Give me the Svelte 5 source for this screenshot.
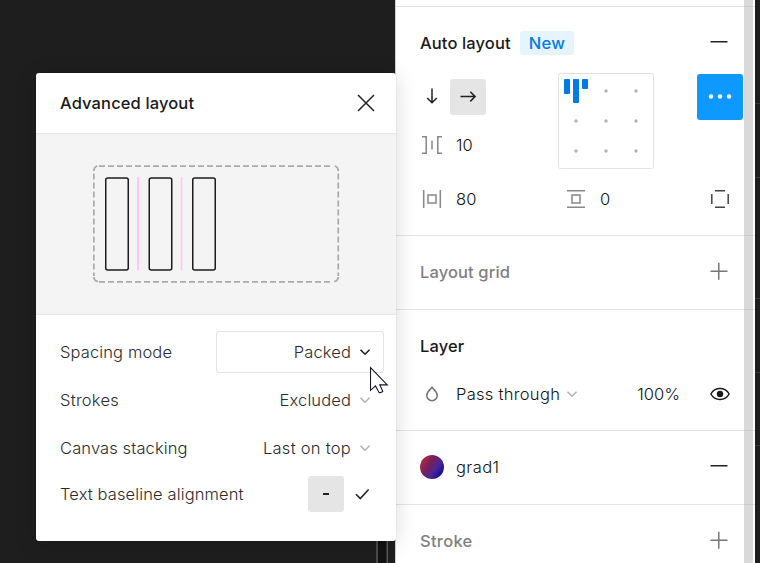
<script>
  const dots = [
    [606, 91], [636, 91],
    [576, 121], [606, 121], [636, 121],
    [576, 151], [606, 151], [636, 151]
  ];
  const guides = [103, 177, 298, 372, 445];
</script>

{#snippet chevron(color)}
  <svg class="chev" width="12" height="12" viewBox="0 0 12 12"><path d="M1.5 3.700 6 8.200l4.500-4.500" fill="none" stroke={color} stroke-width="1.600" /></svg>
{/snippet}

{#snippet plus()}
  <svg class="act" width="18" height="18" viewBox="0 0 18 18"><path d="M.5 9.250h17M8.750.750v17" stroke="#777" stroke-width="1.500" /></svg>
{/snippet}

{#snippet minus()}
  <svg class="act" width="18" height="18" viewBox="0 0 18 18"><path d="M.5 8.750h17" stroke="#222" stroke-width="1.500" /></svg>
{/snippet}

<div class="screen">
  <svg class="canvas" width="760" height="563">
    {#each guides as y}
      <path d="M755 {y + 0.5}h5" stroke="#3a3a3a" />
    {/each}
    <path d="M378 540h9v23h-9z" fill="#131313" />
    <path d="M377 540v23M387.200 540v23" stroke="#777" stroke-width="1" />
  </svg>

  <aside class="panel">
    <section class="top"></section>

    <section class="auto">
      <header>
        <b>Auto layout</b><span class="new">New</span>
        {@render minus()}
      </header>
      <div class="controls">
        <div class="left">
          <div class="dirs">
            <svg width="24" height="36" viewBox="0 0 24 36"><path d="M12 9.500v14M7.200 19l4.800 4.800 4.800-4.800" fill="none" stroke="#222" stroke-width="1.500" /></svg>
            <span class="sel"><svg width="36" height="36" viewBox="0 0 36 36"><path d="M10.500 17.600h14.500M20.300 12.800l4.800 4.800-4.800 4.800" fill="none" stroke="#222" stroke-width="1.500" /></svg></span>
          </div>
          <div class="field gapfield">
            <svg width="24" height="24" viewBox="0 0 24 24"><path d="M2 3.700h4.200v16.600H2M22 3.700h-4.200v16.600H22" fill="none" stroke="#888" stroke-width="1.500" /><path d="M12 7.500v9" stroke="#888" stroke-width="1.500" /></svg>
            <span>10</span>
          </div>
        </div>
        <svg class="align" width="96" height="96" viewBox="558 73 96 96">
          <rect x="558.500" y="73.500" width="95" height="95" rx="2" fill="#fff" stroke="#e2e2e2" />
          <g fill="#007be5"><rect x="564" y="79" width="6" height="15" rx="1" /><rect x="573" y="79" width="6" height="24" rx="1" /><rect x="582" y="79" width="6" height="10" rx="1" /></g>
          {#each dots as [x, y]}<circle cx={x} cy={y} r="1.700" fill="#b3b3b3" />{/each}
        </svg>
        <div class="more"><svg width="46" height="46"><g fill="#fff"><circle cx="14" cy="22.500" r="2.200" /><circle cx="23" cy="22.500" r="2.200" /><circle cx="32" cy="22.500" r="2.200" /></g></svg></div>
      </div>
      <div class="paddings">
        <div class="field first">
          <svg width="24" height="24" viewBox="0 0 24 24"><path d="M3.700 3v18M20.300 3v18M8 8h8v8H8z" fill="none" stroke="#888" stroke-width="1.500" /></svg>
          <span>80</span>
        </div>
        <div class="field">
          <svg width="24" height="24" viewBox="0 0 24 24"><path d="M3 3.700h18M3 20.300h18M8 8h8v8H8z" fill="none" stroke="#888" stroke-width="1.500" /></svg>
          <span>0</span>
        </div>
        <svg class="corner" width="18" height="18" viewBox="0 0 18 18"><path d="M4 .8h10M4 17.200h10M.8 4v10M17.200 4v10" stroke="#444" stroke-width="1.500" /></svg>
      </div>
    </section>

    <section class="simple"><b class="muted">Layout grid</b>{@render plus()}</section>

    <section class="layer">
      <header><b>Layer</b></header>
      <div class="blend">
        <svg width="24" height="24" viewBox="0 0 24 24"><path d="M12 5.200C10.500 7.500 6.750 9.800 6.750 13.400a5.250 5.250 0 0 0 10.500 0C17.250 9.800 13.500 7.500 12 5.200z" fill="none" stroke="#777" stroke-width="1.500" /></svg>
        <span class="mode">Pass through</span>
        {@render chevron('#b3b3b3')}
        <span class="pct">100%</span>
        <svg class="eye" width="20" height="14" viewBox="0 0 20 14"><path d="M.9 7C2.800 3.500 6 1.500 10 1.500S17.200 3.500 19.100 7C17.200 10.500 14 12.500 10 12.500S2.800 10.500.9 7z" fill="none" stroke="#1a1a1a" stroke-width="1.500" /><circle cx="10" cy="7" r="3.200" fill="#1a1a1a" /></svg>
      </div>
    </section>

    <section class="simple"><i class="swatch"></i><span class="name">grad1</span>{@render minus()}</section>

    <section class="simple last"><b class="muted wide">Stroke</b>{@render plus()}</section>
    <div class="scroll"></div>
  </aside>

  <div class="dialog">
    <header>
      <b>Advanced layout</b>
      <svg width="18" height="18" viewBox="0 0 18 18"><path d="M1 1l16 16M17 1L1 17" stroke="#222" stroke-width="1.500" /></svg>
    </header>
    <div class="preview">
      <svg width="360" height="180" viewBox="36 134 360 180" fill="none">
        <g stroke="#aaa" stroke-width="1.700">
          <path d="M99 166.200h234M99 281.800h234" stroke-dasharray="6 3" />
          <path d="M93.850 173.500V276M338.250 173.500V276" stroke-dasharray="6 3" />
          <path d="M93.850 171q0-4 3.500-5M334.750 166q3.500 1 3.500 5M93.850 277q0 3.600 4 4.600M338.250 277q0 3.600-4 4.600" />
        </g>
        <path d="M138 177v93.500" stroke="#ffc7f2" stroke-width="2" />
        <path d="M181.500 177v93.500" stroke="#ffc7f2" stroke-width="1.500" />
        {#each [105.75, 149.25, 192.75] as x}
          <rect {x} y="178" width="22.500" height="92" rx="2" stroke="#1c1c1c" stroke-width="1.500" />
        {/each}
      </svg>
    </div>
    <div class="rows">
      <div class="row"><span>Spacing mode</span><div class="select open"><span>Packed</span>{@render chevron('#222')}</div></div>
      <div class="row"><span class="wide">Strokes</span><div class="select"><span>Excluded</span>{@render chevron('#b3b3b3')}</div></div>
      <div class="row"><span>Canvas stacking</span><div class="select"><span class="wide">Last on top</span>{@render chevron('#b3b3b3')}</div></div>
      <div class="row short">
        <span>Text baseline alignment</span>
        <div class="toggle"><span class="off"><i></i></span><svg width="36" height="36" viewBox="0 0 36 36"><path d="M12 18.200l4.300 4.300 8.300-9" fill="none" stroke="#222" stroke-width="1.600" /></svg></div>
      </div>
    </div>
  </div>

  <svg class="cursor" width="20" height="30" viewBox="0 0 20 30"><path d="M.5 1.500v22.900l5-4.500 3.500 6.500q2 .8 3.800-1l-3-6.500h7.500z" fill="#fff" stroke="#16162a" stroke-width="1.100" /></svg>
</div>

<style>
  .screen {
    position: relative;
    width: 760px;
    height: 563px;
    overflow: hidden;
    background: #1e1e1e;
    color: #2b2b2b;
    font: 300 16.5px/24px Inter, sans-serif;
    letter-spacing: .12px;
    display: flex;
    justify-content: flex-end;
  }
  svg { display: block; flex: none; }
  b { font-weight: 500; color: #1a1a1a; }
  b.muted { color: #808080; }
  .wide { letter-spacing: .27px; }
  .canvas { position: absolute; inset: 0; }
  .panel {
    position: relative;
    box-sizing: border-box;
    width: 360px;
    height: 563px;
    margin-right: 5px;
    background: #fff;
    color: #111;
    border-left: 1px solid #d0d0d0;
  }
  section { box-sizing: border-box; border-bottom: 1px solid #e5e5e5; padding-left: 24px; }
  .top { height: 7px; }
  .auto { height: 229px; }
  .auto header {
    box-sizing: border-box;
    display: flex;
    align-items: center;
    height: 66px;
    padding-top: 6px;
  }
  .auto header b { width: 91px; white-space: nowrap; }
  .new {
    margin-left: 9px;
    width: 54px;
    height: 24px;
    border-radius: 3px;
    background: #e5f4ff;
    color: #007be5;
    font-weight: 500;
    letter-spacing: .25px;
    text-align: center;
  }
  .act { margin: 0 27px 2px auto; }
  .controls { display: flex; height: 96px; align-items: flex-start; }
  .left { width: 138px; padding-top: 6px; }
  .dirs { display: flex; gap: 6px; height: 36px; }
  .sel { width: 36px; height: 36px; border-radius: 3px; background: #e5e5e5; }
  .field { display: flex; align-items: center; gap: 12px; }
  .gapfield { margin-top: 18px; }
  .more {
    width: 46px;
    height: 46px;
    margin: 1px 0 0 43px;
    border-radius: 3px;
    background: #0d99ff;
  }
  .paddings { display: flex; align-items: center; height: 60px; }
  .field.first { width: 144px; }
  .corner { margin-left: auto; margin-right: 26px; }
  .simple { display: flex; align-items: center; height: 74px; padding-bottom: 2px; }
  .simple.last { border: 0; }
  .layer { height: 121px; }
  .layer header { height: 72px; line-height: 72px; }
  .blend { display: flex; align-items: center; height: 24px; }
  .mode { width: 103px; margin: 0 7px 0 12px; white-space: nowrap; letter-spacing: .3px; }
  .name { letter-spacing: .4px; }
  .pct { margin-left: auto; margin-right: 30px; }
  .eye { margin-right: 25px; }
  .swatch {
    width: 24px;
    height: 24px;
    margin-right: 12px;
    border-radius: 50%;
    background: linear-gradient(125deg, #b52f46 8%, #792057 38%, #4c249a 63%, #090f8e 88%);
  }
  .scroll {
    position: absolute;
    left: 348px;
    top: 0;
    width: 9px;
    height: 563px;
    background: rgba(179, 179, 179, .5);
  }
  .dialog {
    position: absolute;
    left: 36px;
    top: 73px;
    width: 360px;
    height: 468px;
    border-radius: 3px;
    background: #fff;
    box-shadow: 0 3px 21px rgba(0, 0, 0, .15), 0 0 1px rgba(0, 0, 0, .35);
  }
  .dialog header {
    display: flex;
    align-items: center;
    justify-content: space-between;
    height: 60px;
    padding: 0 21px 0 24px;
    border-bottom: 1px solid #e5e5e5;
  }
  .preview { height: 180px; background: #f4f4f4; border-bottom: 1px solid #e5e5e5; }
  .rows { padding: 13px 12px 0 24px; }
  .row { display: flex; align-items: center; justify-content: space-between; height: 48px; }
  .row.short { height: 44px; }
  .select {
    box-sizing: border-box;
    display: flex;
    align-items: center;
    justify-content: flex-end;
    gap: 8px;
    width: 168px;
    height: 42px;
    padding-right: 12px;
    border: 1px solid transparent;
    border-radius: 3px;
  }
  .select.open { border-color: #e2e2e2; }
  .toggle { display: flex; margin-right: 4px; }
  .off {
    display: flex;
    align-items: center;
    justify-content: center;
    width: 36px;
    height: 36px;
    border-radius: 3px;
    background: #e5e5e5;
  }
  .off i { width: 6px; height: 2px; background: #222; }
  .cursor { position: absolute; left: 370px; top: 366px; }
</style>
